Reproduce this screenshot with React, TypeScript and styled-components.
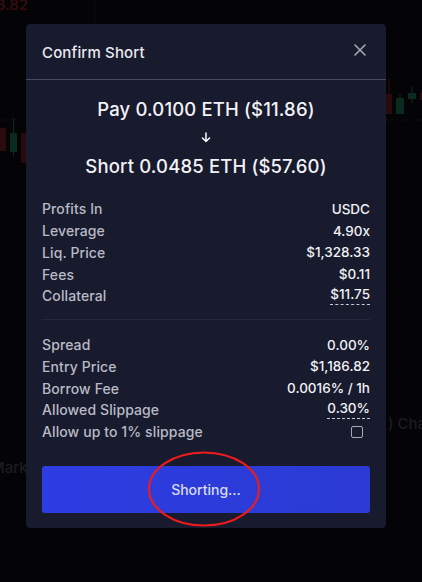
import React from "react";
import styled, { createGlobalStyle } from "styled-components";

const GlobalStyle = createGlobalStyle`
  html, body { margin: 0; padding: 0; background: #040406; }
  body { font-family: Inter, "Noto Sans", "Liberation Sans", sans-serif; -webkit-font-smoothing: antialiased; }
  * { box-sizing: border-box; }
`;

const Page = styled.div`
  position: relative;
  width: 422px;
  height: 582px;
  overflow: hidden;
  background: #040406;
  padding: 24px 0 0 26px;
`;

const ChartBackdrop = styled.svg`
  position: absolute;
  inset: 0;
  width: 422px;
  height: 582px;
`;

const Ghost = styled.span<{ $x: number; $y: number; $color: string; $size: number }>`
  position: absolute;
  left: ${(p) => p.$x}px;
  top: ${(p) => p.$y}px;
  color: ${(p) => p.$color};
  font-size: ${(p) => p.$size}px;
  font-weight: 500;
  line-height: 1;
  white-space: nowrap;
`;

const Modal = styled.div`
  position: relative;
  width: 360px;
  background: #181a2d;
  border-radius: 4px;
  display: flex;
  flex-direction: column;
  color: #ececf1;
`;

const Header = styled.div`
  height: 56px;
  display: flex;
  align-items: center;
  justify-content: space-between;
  padding: 0 19px 0 16px;
  border-bottom: 1px solid #474a5f;
`;

const Title = styled.div`
  font-size: 15px;
  font-weight: 500;
  color: #e9e9ef;
  letter-spacing: 0.15px;
  margin-top: 1px;
`;

const CloseButton = styled.button`
  width: 14px;
  height: 14px;
  padding: 0;
  border: none;
  background: none;
  display: flex;
  align-items: center;
  justify-content: center;
  margin-top: -4px;
  cursor: pointer;
`;

const Body = styled.div`
  padding: 16px 16px 15px;
  display: flex;
  flex-direction: column;
`;

const Amounts = styled.div`
  display: flex;
  flex-direction: column;
  align-items: center;
  margin-bottom: 19px;
`;

const AmountLine = styled.div`
  font-size: 18.5px;
  font-weight: 500;
  line-height: 26px;
  color: #f2f2f6;
  letter-spacing: 0.15px;
`;

const Arrow = styled.div`
  height: 31px;
  display: flex;
  align-items: center;
  justify-content: center;
`;

const Group = styled.div`
  display: flex;
  flex-direction: column;
`;

const Row = styled.div`
  display: flex;
  align-items: center;
  justify-content: space-between;
  height: 21.75px;
  font-size: 13.5px;
`;

const Label = styled.span`
  color: #b9bac6;
  font-weight: 500;
  font-size: 14px;
  letter-spacing: 0.1px;
`;

const Value = styled.span<{ $dashed?: boolean }>`
  color: #f1f1f5;
  font-weight: 500;
  padding-bottom: ${(p) => (p.$dashed ? "1px" : "0")};
  border-bottom: ${(p) => (p.$dashed ? "1px dashed #c9cad4" : "none")};
  line-height: ${(p) => (p.$dashed ? "17px" : "normal")};
`;

const Divider = styled.div`
  height: 1px;
  background: #262839;
  margin: 12px 0 14px;
`;

const Checkbox = styled.span`
  width: 12px;
  height: 12px;
  border: 1.5px solid #a9aab6;
  border-radius: 2px;
  margin-right: 7px;
`;

const SubmitArea = styled.div`
  position: relative;
  margin-top: 23px;
`;

const SubmitButton = styled.button`
  width: 100%;
  height: 47px;
  border: none;
  border-radius: 3px;
  background: linear-gradient(90deg, #2d3de2 0%, #2b3bd3 100%);
  color: #d9dcf2;
  font-family: inherit;
  font-size: 14px;
  font-weight: 500;
  cursor: default;
`;

const Annotation = styled.svg`
  position: absolute;
  left: 104px;
  top: -15px;
  width: 116px;
  height: 78px;
  overflow: visible;
  pointer-events: none;
`;

type RowData = { label: string; value: string; dashed?: boolean };

const group1: RowData[] = [
  { label: "Profits In", value: "USDC" },
  { label: "Leverage", value: "4.90x" },
  { label: "Liq. Price", value: "$1,328.33" },
  { label: "Fees", value: "$0.11" },
  { label: "Collateral", value: "$11.75", dashed: true },
];

const group2: RowData[] = [
  { label: "Spread", value: "0.00%" },
  { label: "Entry Price", value: "$1,186.82" },
  { label: "Borrow Fee", value: "0.0016% / 1h" },
  { label: "Allowed Slippage", value: "0.30%", dashed: true },
];

const candles = [
  { x: 0, w: 6, top: 128, bottom: 151, wt: 128, wb: 151, c: "#2a0b0d" },
  { x: 10, w: 7, top: 133, bottom: 152, wt: 118, wb: 156, c: "#0b2a1f" },
  { x: 21, w: 5, top: 133, bottom: 163, wt: 133, wb: 163, c: "#2a0b0d" },
  { x: 386, w: 6, top: 94, bottom: 114, wt: 79, wb: 114, c: "#2a0b0d" },
  { x: 396, w: 8, top: 98, bottom: 114, wt: 94, wb: 114, c: "#0b2a1f" },
  { x: 408, w: 8, top: 93, bottom: 99, wt: 87, wb: 103, c: "#0b2a1f" },
  { x: 420, w: 4, top: 93, bottom: 100, wt: 90, wb: 100, c: "#2a0b0d" },
];

export default function App() {
  return (
    <>
      <GlobalStyle />
      <Page>
        <ChartBackdrop viewBox="0 0 422 582">
          <line x1="95" y1="0" x2="95" y2="24" stroke="#0d0d12" strokeWidth="1" />
          <line x1="0" y1="120" x2="26" y2="120" stroke="#141418" strokeDasharray="2 3" />
          <line x1="386" y1="120" x2="422" y2="120" stroke="#141418" strokeDasharray="2 3" />
          {candles.map((k, i) => (
            <g key={i}>
              <line x1={k.x + k.w / 2} y1={k.wt} x2={k.x + k.w / 2} y2={k.wb} stroke={k.c} strokeWidth="1" />
              <rect x={k.x} y={k.top} width={k.w} height={k.bottom - k.top} fill={k.c} />
            </g>
          ))}
        </ChartBackdrop>
        <Ghost $x={-4} $y={-3} $color="#3a0c0e" $size={15}>3.82</Ghost>
        <Ghost $x={388} $y={416} $color="#1c1c20" $size={15}>) Cha</Ghost>
        <Ghost $x={-9} $y={460} $color="#1c1c20" $size={15}>Mark</Ghost>

        <Modal>
          <Header>
            <Title>Confirm Short</Title>
            <CloseButton aria-label="Close">
              <svg width="12" height="12" viewBox="0 0 12 12">
                <path d="M1 1 L11 11 M11 1 L1 11" stroke="#a7a8b6" strokeWidth="1.6" strokeLinecap="round" />
              </svg>
            </CloseButton>
          </Header>
          <Body>
            <Amounts>
              <AmountLine>Pay 0.0100 ETH ($11.86)</AmountLine>
              <Arrow>
                <svg width="10" height="11" viewBox="0 0 10 11">
                  <path d="M5 1 V9.5 M1.5 6 L5 9.5 L8.5 6" stroke="#f2f2f6" strokeWidth="1.6" fill="none" strokeLinecap="round" strokeLinejoin="round" />
                </svg>
              </Arrow>
              <AmountLine>Short 0.0485 ETH ($57.60)</AmountLine>
            </Amounts>
            <Group>
              {group1.map((r) => (
                <Row key={r.label}>
                  <Label>{r.label}</Label>
                  <Value $dashed={r.dashed}>{r.value}</Value>
                </Row>
              ))}
            </Group>
            <Divider />
            <Group>
              {group2.map((r) => (
                <Row key={r.label}>
                  <Label>{r.label}</Label>
                  <Value $dashed={r.dashed}>{r.value}</Value>
                </Row>
              ))}
              <Row>
                <Label>Allow up to 1% slippage</Label>
                <Checkbox />
              </Row>
            </Group>
            <SubmitArea>
              <SubmitButton>Shorting...</SubmitButton>
              <Annotation viewBox="0 0 116 78">
                <ellipse cx="58" cy="38" rx="55" ry="36.5" fill="none" stroke="#ec1c1c" strokeWidth="2.2" />
              </Annotation>
            </SubmitArea>
          </Body>
        </Modal>
      </Page>
    </>
  );
}
